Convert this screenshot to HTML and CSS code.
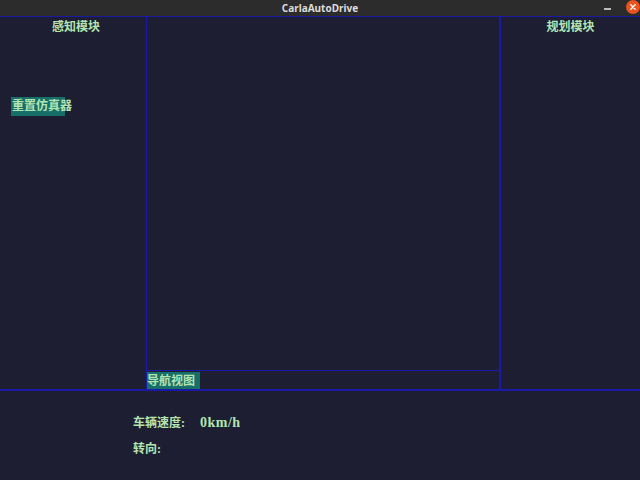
FILE: index.html
```html
<!DOCTYPE html>
<html>
<head>
<meta charset="utf-8">
<link rel="stylesheet" href="styles.css">
</head>
<body>
<div class="titlebar">
  <span class="title">CarlaAutoDrive</span>
  <span class="controls">
    <span class="min"></span>
    <span class="close">
      <svg width="14" height="14" viewBox="0 0 14 14"><circle cx="7" cy="7" r="7" fill="#e95420"/><path d="M4.8 4.8L9.2 9.2M9.2 4.8L4.8 9.2" stroke="#fff" stroke-width="1.3" stroke-linecap="round"/></svg>
    </span>
  </span>
</div>
<div class="hline"></div>
<div class="top">
  <div class="panel left">
    <div class="heading">感知模块</div>
    <div class="reset"><span class="btn">重置仿真器</span></div>
  </div>
  <div class="vline"></div>
  <div class="center">
    <div class="view"></div>
    <div class="hline"></div>
    <div class="navrow"><span class="tag">导航视图</span></div>
  </div>
  <div class="vline thick"></div>
  <div class="panel right">
    <div class="heading">规划模块</div>
  </div>
</div>
<div class="hline thick"></div>
<div class="bottom">
  <div class="row">车辆速度:&nbsp;&nbsp;&nbsp;&nbsp;<span class="num">0km/h</span></div>
  <div class="row">转向:</div>
</div>
</body>
</html>
```
FILE: styles.css
```css
* { box-sizing: border-box; }
html, body {
  margin: 0;
  padding: 0;
  width: 640px;
  height: 480px;
  overflow: hidden;
  background: #1e1e32;
}
body {
  font-family: "Liberation Serif", "Noto Sans CJK SC", serif;
  color: #b4e4b0;
  display: flex;
  flex-direction: column;
}
.titlebar {
  height: 16px;
  flex: 0 0 16px;
  background: #2c2c2c;
  position: relative;
  display: flex;
  align-items: center;
  justify-content: center;
}
.title {
  font-family: "Noto Sans", "DejaVu Sans", sans-serif;
  font-weight: bold;
  font-size: 10px;
  color: #dcdcdc;
  line-height: 16px;
}
.controls {
  position: absolute;
  right: 0;
  top: 0;
  height: 16px;
  display: flex;
  align-items: center;
}
.min {
  width: 7px;
  height: 2px;
  background: #bbbbbb;
  margin-right: 15px;
  margin-top: 2px;
}
.close {
  width: 14px;
  height: 14px;
  margin-top: -2px;
  display: block;
}
.close svg { display: block; }
.hline {
  height: 1px;
  flex: 0 0 1px;
  background: #1a1aa6;
}
.hline.thick {
  height: 2px;
  flex: 0 0 2px;
}
.vline {
  width: 1px;
  flex: 0 0 1px;
  background: #1a1aa6;
}
.vline.thick {
  width: 2px;
  flex: 0 0 2px;
}
.top {
  display: flex;
  height: 372px;
  flex: 0 0 372px;
}
.panel {
  display: flex;
  flex-direction: column;
}
.left {
  width: 146px;
  flex: 0 0 146px;
}
.right {
  flex: 1 1 auto;
}
.heading {
  font-size: 12px;
  font-weight: bold;
  text-align: center;
  line-height: 18px;
  margin-top: 1px;
}
.left .heading { padding-left: 6px; }
.reset {
  margin-top: 60px;
  padding-left: 11px;
}
.btn {
  display: inline-block;
  font-size: 12px;
  font-weight: bold;
  background: #176f6a;
  width: 54px;
  height: 19px;
  line-height: 19px;
  white-space: nowrap;
  padding-left: 1px;
}
.center {
  width: 352px;
  flex: 0 0 352px;
  display: flex;
  flex-direction: column;
}
.view {
  height: 353px;
  flex: 0 0 353px;
}
.navrow {
  height: 18px;
}
.tag {
  display: inline-block;
  font-size: 12px;
  font-weight: bold;
  background: #176f6a;
  height: 18px;
  line-height: 18px;
  width: 53px;
  white-space: nowrap;
}
.bottom {
  flex: 1 1 auto;
  padding-top: 19px;
  padding-left: 133px;
}
.row {
  font-size: 12px;
  font-weight: bold;
  line-height: 26px;
}
.num {
  font-size: 14px;
  font-weight: bold;
  letter-spacing: 0.5px;
  margin-left: 3px;
}
```
